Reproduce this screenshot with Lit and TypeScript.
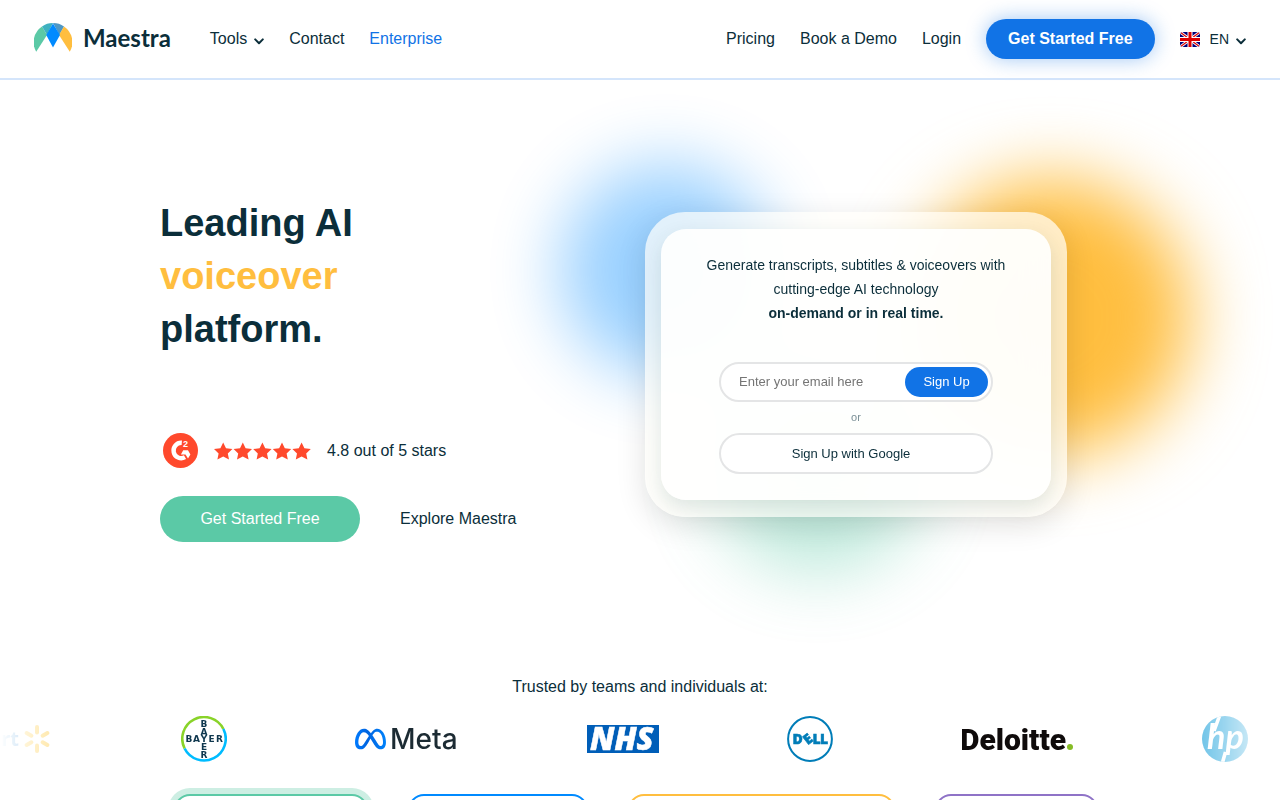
import { LitElement, html, css, svg } from "lit";
import { customElement } from "lit/decorators.js";

const chevron = html`<svg class="chevron" viewBox="0 0 10 7" width="10" height="7" aria-hidden="true">
  <path d="M1.2 1.4 L5 5.2 L8.8 1.4" fill="none" stroke="currentColor" stroke-width="2" stroke-linecap="round" stroke-linejoin="round" />
</svg>`;

@customElement("site-header")
export class SiteHeader extends LitElement {
  static styles = css`
    :host {
      display: block;
    }
    .bar {
      display: flex;
      align-items: center;
      gap: 25px;
      height: 78px;
      padding: 0 34px;
      background: #fff;
      border-bottom: 2px solid #d4e5fb;
    }
    a,
    button {
      font: inherit;
      color: #0b2e3a;
      text-decoration: none;
      background: none;
      border: 0;
      padding: 0;
      white-space: nowrap;
    }
    .brand {
      display: flex;
      align-items: center;
      gap: 11px;
      margin-right: 14px;
      padding-bottom: 3px;
      font: 700 24px/30px Lato, sans-serif;
    }
    .menu {
      display: flex;
      align-items: center;
      gap: 7px;
    }
    .chevron {
      margin-top: 5px;
    }
    .enterprise {
      color: #1173e6;
    }
    .right {
      display: flex;
      align-items: center;
      gap: 25px;
      margin-left: auto;
    }
    .cta {
      padding: 0 22px;
      line-height: 40px;
      border-radius: 20px;
      background: #1173e6;
      color: #fff;
      font-weight: 700;
      box-shadow: 0 0 20px rgba(17, 115, 230, 0.4);
    }
    .lang {
      display: flex;
      align-items: center;
      gap: 7px;
      font-size: 14px;
    }
    .flag {
      border-radius: 3px;
      margin-right: 3px;
    }
  `;

  render() {
    return html`
      <header class="bar">
        <a class="brand" href="#">
          <svg viewBox="0 0 38 29" width="38" height="29" aria-hidden="true">
            <path fill="#5bc9a6" d="M2.2 28.8 A19 19 0 0 1 8 3.4 L13 12 Z" />
            <path fill="#3eb1c0" d="M8 3.4 A19 19 0 0 1 19 0 L13 12 Z" />
            <path fill="#4e97c4" d="M19 0 A19 19 0 0 1 30 3.4 L25.4 12 Z" />
            <path fill="#ffbe3f" d="M30 3.4 A19 19 0 0 1 35.8 28.8 L25 12 Z" />
            <path fill="#008aff" d="M19 0.6 L26 12 L19 24.4 L12.2 12 Z" />
          </svg>
          Maestra
        </a>
        <button class="menu" type="button">Tools ${chevron}</button>
        <a href="#">Contact</a>
        <a class="enterprise" href="#">Enterprise</a>
        <nav class="right" aria-label="Account">
          <a href="#">Pricing</a>
          <a href="#">Book a Demo</a>
          <a href="#">Login</a>
          <a class="cta" href="#">Get Started Free</a>
          <button class="lang" type="button">
            <svg class="flag" viewBox="0 0 20 15" width="20" height="15" aria-hidden="true">
              <rect width="20" height="15" fill="#00007a" />
              <path d="M0 0 L20 15 M20 0 L0 15" stroke="#fff" stroke-width="3" />
              <path d="M0 0 L20 15 M20 0 L0 15" stroke="#d00" stroke-width="1.2" />
              <path d="M10 0 V15 M0 7.5 H20" stroke="#fff" stroke-width="5" />
              <path d="M10 0 V15 M0 7.5 H20" stroke="#d00" stroke-width="3" />
            </svg>
            EN ${chevron}
          </button>
        </nav>
      </header>
    `;
  }
}

@customElement("signup-card")
export class SignupCard extends LitElement {
  static styles = css`
    :host {
      display: block;
      position: relative;
    }
    .blob {
      position: absolute;
      border-radius: 50%;
      filter: blur(35px);
    }
    .blue {
      left: -85px;
      top: -48px;
      width: 212px;
      height: 212px;
      background: #008aff;
      opacity: 0.4;
    }
    .orange {
      right: -124px;
      top: -34px;
      width: 278px;
      height: 278px;
      background: #ffbe3f;
    }
    .green {
      left: 65px;
      top: 145px;
      width: 216px;
      height: 216px;
      background: #5bc9a6;
      opacity: 0.4;
    }
    .glass {
      position: relative;
      padding: 17px 16px;
      border-radius: 40px;
      background: rgba(255, 254, 250, 0.7);
      backdrop-filter: blur(20px);
      box-shadow: 0 8px 30px rgba(0, 0, 0, 0.12);
    }
    .panel {
      display: flex;
      flex-direction: column;
      padding: 24px 58px 26px;
      border-radius: 25px;
      background: rgba(255, 255, 255, 0.9);
      box-shadow: 0 8px 20px rgba(0, 60, 50, 0.12);
      text-align: center;
    }
    .lead {
      margin: 0 -40px 37px;
      font-size: 14px;
      line-height: 24px;
    }
    .email {
      display: flex;
      align-items: center;
      height: 40px;
      box-sizing: border-box;
      padding: 0 3px 0 18px;
      border: 2px solid #e4e5e6;
      border-radius: 20px;
      background: #fff;
    }
    input {
      flex: 1;
      min-width: 0;
      padding: 0;
      border: 0;
      outline: 0;
      background: none;
      font: inherit;
      font-size: 13px;
    }
    input::placeholder {
      color: #757575;
    }
    button {
      font: inherit;
      font-size: 13px;
      border: 0;
      padding: 0;
    }
    .submit {
      width: 83px;
      height: 30px;
      border-radius: 16px;
      background: #1173e6;
      color: #fff;
    }
    .or {
      margin: 0;
      font-size: 11px;
      line-height: 31px;
      color: #7b9097;
    }
    .google {
      height: 41px;
      padding-right: 10px;
      border: 2px solid #e4e5e6;
      border-radius: 21px;
      background: #fff;
      color: #0b2e3a;
    }
  `;

  render() {
    return html`
      <div class="blob blue"></div>
      <div class="blob orange"></div>
      <div class="blob green"></div>
      <div class="glass">
        <div class="panel">
          <p class="lead">
            Generate transcripts, subtitles &amp; voiceovers with<br />cutting-edge AI technology<br /><b
              >on-demand or in real time.</b
            >
          </p>
          <form class="email" @submit=${(e: Event) => e.preventDefault()}>
            <input type="email" aria-label="Email" placeholder="Enter your email here" />
            <button class="submit" type="submit">Sign Up</button>
          </form>
          <p class="or">or</p>
          <button class="google" type="button">Sign Up with Google</button>
        </div>
      </div>
    `;
  }
}

@customElement("logo-strip")
export class LogoStrip extends LitElement {
  static styles = css`
    :host {
      display: block;
    }
    .track {
      display: flex;
      align-items: center;
      justify-content: space-between;
      height: 46px;
      padding: 0 32px 0 0;
      overflow: hidden;
      mask-image: linear-gradient(90deg, transparent, #000 11%, #000 89%, transparent);
    }
    svg {
      display: block;
      flex: none;
    }
    .walmart {
      display: flex;
      justify-content: flex-end;
      width: 52px;
      flex: none;
    }
    .bayer {
      font-family: "DejaVu Sans", sans-serif;
      font-weight: 700;
      font-size: 9px;
      fill: #10384f;
      text-anchor: middle;
    }
    .meta {
      font-family: Inter, sans-serif;
      font-weight: 500;
      font-size: 28px;
      fill: #1c2b33;
    }
    .nhs {
      font-family: "Open Sans", sans-serif;
      font-weight: 800;
      font-style: italic;
      font-size: 31px;
      fill: #fff;
      stroke: #fff;
      stroke-width: 0.5px;
    }
    .dell {
      font-family: "Open Sans", sans-serif;
      font-weight: 800;
      font-size: 14px;
      fill: #007db8;
      stroke: #007db8;
      stroke-width: 0.5px;
    }
    .deloitte {
      font-family: Roboto, sans-serif;
      font-weight: 900;
      font-size: 30px;
      fill: #0f0b0b;
    }
    .hp {
      font-family: Lato, sans-serif;
      font-weight: 700;
      font-style: italic;
      font-size: 34px;
      fill: #fff;
    }
    .wm {
      font-family: "Open Sans", sans-serif;
      font-weight: 700;
      font-size: 20px;
      fill: #0071ce;
    }
  `;

  private spokes = [0, 60, 120, 180, 240, 300];

  render() {
    return html`
      <div class="track">
        <div class="walmart">
          <svg viewBox="0 0 120 46" width="120" height="46" role="img" aria-label="Walmart">
            <text class="wm" x="87" y="30" text-anchor="end">Walmart</text>
            ${this.spokes.map(
              (a) =>
                svg`<path d="M105 16.5 V11" stroke="#ffc220" stroke-width="4" stroke-linecap="round" transform="rotate(${a} 105 23)" />`
            )}
          </svg>
        </div>
        <svg viewBox="0 0 46 46" width="46" height="46" role="img" aria-label="Bayer">
          <path d="M3.6 32.5 A21.6 21.6 0 1 1 42.4 13" fill="none" stroke="#89d329" stroke-width="2.6" />
          <path d="M42.4 13 A21.6 21.6 0 0 1 3.6 32.5" fill="none" stroke="#00bcff" stroke-width="2.6" />
          <text class="bayer" x="7.9 15.5 23 30.6 38.4" y="26.3">BAYER</text>
          <text class="bayer" x="23 23 23 23" y="11 18.6 34 41.7">BAER</text>
        </svg>
        <svg viewBox="0 0 103 46" width="103" height="46" role="img" aria-label="Meta">
          <defs>
            <linearGradient id="mg" x1="0" x2="1">
              <stop offset="0" stop-color="#007bff" />
              <stop offset="0.4" stop-color="#0064e0" />
              <stop offset="1" stop-color="#0082fb" />
            </linearGradient>
          </defs>
          <path
            transform="translate(0 7.6) scale(1.29)"
            fill="url(#mg)"
            d="M6.915 4.03c-1.968 0-3.683 1.28-4.871 3.113C.704 9.208 0 11.883 0 14.449c0 .706.07 1.369.21 1.973a6.624 6.624 0 0 0 .265.86 5.297 5.297 0 0 0 .371.761c.696 1.159 1.818 1.927 3.593 1.927 1.497 0 2.633-.671 3.965-2.444.76-1.012 1.144-1.626 2.663-4.32l.756-1.339.186-.325c.061.1.121.196.183.3l2.152 3.595c.724 1.21 1.665 2.556 2.47 3.314 1.046.987 1.992 1.22 3.06 1.22 1.075 0 1.876-.355 2.455-.843a3.743 3.743 0 0 0 .81-.973c.542-.939.861-2.127.861-3.745 0-2.72-.681-5.357-2.084-7.45-1.282-1.912-2.957-2.93-4.716-2.93-1.047 0-2.088.467-3.053 1.308-.652.57-1.257 1.29-1.82 2.05-.69-.875-1.335-1.547-1.958-2.056-1.182-.966-2.315-1.303-3.454-1.303zm10.16 2.053c1.147 0 2.188.758 2.992 1.999 1.132 1.748 1.647 4.195 1.647 6.4 0 1.548-.368 2.9-1.839 2.9-.58 0-1.027-.23-1.664-1.004-.496-.601-1.343-1.878-2.832-4.358l-.617-1.028a44.908 44.908 0 0 0-1.255-1.98c.07-.109.141-.224.211-.327 1.12-1.667 2.118-2.602 3.358-2.602zm-10.201.553c1.265 0 2.058.791 2.675 1.446.307.327.737.871 1.234 1.579l-1.02 1.566c-.757 1.163-1.882 3.017-2.837 4.338-1.191 1.649-1.81 1.817-2.486 1.817-.524 0-1.038-.237-1.383-.794-.263-.426-.464-1.13-.464-2.046 0-2.221.63-4.535 1.66-6.088.454-.687.964-1.226 1.533-1.533a2.264 2.264 0 0 1 1.088-.285z"
          />
          <text class="meta" x="35" y="33">Meta</text>
        </svg>
        <svg viewBox="0 0 72 28" width="72" height="28" role="img" aria-label="NHS">
          <rect width="72" height="28" fill="#005eb8" />
          <text class="nhs" x="3" y="25">NHS</text>
        </svg>
        <svg viewBox="0 0 46 46" width="46" height="46" role="img" aria-label="Dell">
          <circle cx="23" cy="23" r="21.9" fill="none" stroke="#007db8" stroke-width="2" />
          <text class="dell" x="5.5" y="27.8">D</text>
          <text class="dell" x="17" y="27.8" transform="rotate(-38 21 23)">E</text>
          <text class="dell" x="25.5" y="27.8">L</text>
          <text class="dell" x="33" y="27.8">L</text>
        </svg>
        <svg viewBox="0 0 112 46" width="112" height="46" role="img" aria-label="Deloitte">
          <text class="deloitte" x="-2" y="34">Deloitte</text>
          <circle cx="108" cy="31" r="3" fill="#86bc25" />
        </svg>
        <svg viewBox="0 0 46 46" width="46" height="46" role="img" aria-label="HP">
          <clipPath id="disc"><circle cx="23" cy="23" r="23" /></clipPath>
          <circle cx="23" cy="23" r="23" fill="#0096d6" />
          <path clip-path="url(#disc)" d="M18.2 -2 L12 15 M23.5 36 L19.5 50" stroke="#fff" stroke-width="3.6" />
          <text class="hp" x="5" y="33">hp</text>
        </svg>
      </div>
    `;
  }
}

@customElement("app-root")
export class AppRoot extends LitElement {
  static styles = css`
    :host {
      display: block;
      height: 100vh;
      overflow: hidden;
      background: #fff;
      color: #0b2e3a;
      font: 16px/24px "Liberation Sans", Arial, sans-serif;
    }
    .hero {
      display: grid;
      grid-template-columns: 9fr 11fr;
      align-items: start;
      padding: 117px 12.5% 0;
    }
    h1 {
      margin: 0 0 77px;
      font-size: 38px;
      line-height: 53px;
    }
    .accent {
      color: #ffbe3f;
    }
    .rating {
      display: flex;
      align-items: center;
      gap: 16px;
      margin: 0 0 28px 3px;
    }
    .rating svg {
      display: block;
    }
    .two {
      font: 700 9px "Liberation Sans", sans-serif;
      fill: #fff;
    }
    .actions {
      display: flex;
      align-items: center;
      gap: 40px;
      white-space: nowrap;
    }
    .actions a {
      color: inherit;
      text-decoration: none;
    }
    .actions .start {
      width: 200px;
      line-height: 46px;
      border-radius: 23px;
      background: #5bc9a6;
      color: #fff;
      text-align: center;
    }
    .card {
      width: 422px;
      margin: 15px auto 0;
    }
    .trusted {
      margin: 133px 0 17px;
      text-align: center;
    }
    .tabs {
      display: flex;
      gap: 40px;
      padding: 32px 0 0 174px;
    }
    .tab {
      box-sizing: border-box;
      height: 56px;
      flex: none;
      border: 2px solid;
      border-radius: 16px;
      background: #fff;
    }
    .tab.green {
      width: 194px;
      border-color: #5bc9a6;
      box-shadow: 0 0 0 6px #cdeee3;
    }
    .tab.blue {
      width: 180px;
      border-color: #008aff;
    }
    .tab.yellow {
      width: 267px;
      border-color: #ffbe3f;
    }
    .tab.purple {
      width: 163px;
      border-color: #8f73c7;
    }
  `;

  private tabs = ["green", "blue", "yellow", "purple"];

  render() {
    return html`
      <site-header></site-header>
      <main>
        <section class="hero">
          <div>
            <h1>Leading AI<br /><span class="accent">voiceover</span><br />platform.</h1>
            <div class="rating">
              <svg viewBox="0 0 35 35" width="35" height="35" role="img" aria-label="G2">
                <circle cx="17.5" cy="17.5" r="17.5" fill="#ff492c" />
                <path d="M18.8 9.8 A7.7 7.7 0 1 0 22 24.2" fill="none" stroke="#fff" stroke-width="4.4" />
                <path d="M20.2 17.2 H25 L27.4 21.4 L25 25.4 L22.5 21.4 H17.9 Z" fill="#fff" />
                <text class="two" x="20" y="14.2">2</text>
              </svg>
              <svg viewBox="0 0 97 18" width="97" height="18" role="img" aria-label="Five stars">
                ${[0, 1, 2, 3, 4].map(
                  (i) =>
                    svg`<path fill="#ff492c" transform="translate(${i * 19.6} 0.5)" d="M9.2 0 L12 5.8 L18.4 6.5 L13.8 10.9 L15 17 L9.2 14 L3.4 17 L4.6 10.9 L0 6.5 L6.4 5.8 Z" />`
                )}
              </svg>
              <span>4.8 out of 5 stars</span>
            </div>
            <div class="actions">
              <a class="start" href="#">Get Started Free</a>
              <a href="#">Explore Maestra</a>
            </div>
          </div>
          <signup-card class="card"></signup-card>
        </section>
        <p class="trusted">Trusted by teams and individuals at:</p>
        <logo-strip></logo-strip>
        <div class="tabs">
          ${this.tabs.map((t) => html`<div class="tab ${t}"></div>`)}
        </div>
      </main>
    `;
  }
}
